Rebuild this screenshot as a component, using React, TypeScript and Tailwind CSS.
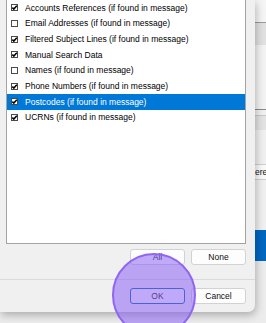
import React from "react";

const ITEMS = [
  { label: "Accounts References (if found in message)", checked: true },
  { label: "Email Addresses (if found in message)", checked: false },
  { label: "Filtered Subject Lines (if found in message)", checked: true },
  { label: "Manual Search Data", checked: true },
  { label: "Names (if found in message)", checked: false },
  { label: "Phone Numbers (if found in message)", checked: true },
  { label: "Postcodes (if found in message)", checked: true, selected: true },
  { label: "UCRNs (if found in message)", checked: true },
];

function Check({ checked }: { checked: boolean }) {
  return (
    <span className="w-[7px] h-[7px] shrink-0 bg-white border border-[#4a4a4a] flex items-center justify-center">
      {checked && (
        <svg width="7" height="7" viewBox="0 0 7 7" className="-m-px">
          <polyline points="1.3,3.6 2.8,5.1 5.8,1.7" fill="none" stroke="#000" strokeWidth="1.5" />
        </svg>
      )}
    </span>
  );
}

function Btn({ children, primary }: { children: React.ReactNode; primary?: boolean }) {
  return (
    <button
      className={`w-[55px] h-[16px] rounded-[3px] bg-[#fdfdfd] text-[8.5px] text-[#111] leading-none flex items-center justify-center ${
        primary ? "border border-[#0067c0] shadow-[inset_0_0_0_1px_#ffffff]" : "border border-[#d2d2d2]"
      }`}
    >
      {children}
    </button>
  );
}

export default function App() {
  return (
    <div className="relative w-[266px] h-[323px] overflow-hidden bg-[#ececec] font-['Liberation_Sans',Arial,sans-serif]">
      <div className="flex h-full">
        {/* dialog */}
        <div className="relative z-10 w-[255px] h-[312px] shrink-0 bg-[#f0f0f0] rounded-br-[7px] shadow-[1px_3px_9px_rgba(0,0,0,0.28)] flex flex-col">
          <div className="ml-[6px] w-[240px] h-[244px] bg-white border border-t-0 border-[#a3a3a3]">
            {ITEMS.map((it) => (
              <div
                key={it.label}
                className={`h-[15.7px] flex items-center gap-[7px] pl-[4px] text-[8.5px] whitespace-nowrap ${
                  it.selected ? "bg-[#0078d7] text-white" : "text-black"
                }`}
              >
                <Check checked={it.checked} />
                <span className="leading-none">{it.label}</span>
              </div>
            ))}
          </div>
          <div className="mt-[5px] flex justify-end gap-[6px] pr-[9px]">
            <Btn>All</Btn>
            <Btn>None</Btn>
          </div>
          <div className="mt-[14px] h-px bg-[#dadada]" />
          <div className="mt-[8px] flex justify-end gap-[6px] pr-[9px]">
            <Btn primary>OK</Btn>
            <Btn>Cancel</Btn>
          </div>
        </div>

        {/* application behind the dialog */}
        <div className="flex-1 flex flex-col">
          <div className="h-[22px] bg-[#f5f5f5]" />
          <div className="h-px bg-[#9a9a9a]" />
          <div className="h-[22px] bg-[#e1e1e1]" />
          <div className="h-[64px] bg-[#f3f3f3]" />
          <div className="h-px bg-[#8a8a8a]" />
          <div className="h-[5px] bg-[#f0f0f0]" />
          <div className="h-px bg-[#c8c8c8]" />
          <div className="h-[14px] bg-[#e3e3e3]" />
          <div className="h-[34px] bg-[#f0f0f0]" />
          <div className="h-[16px] bg-[#fafafa] border-y border-[#cfcfcf] flex items-center text-[8.5px] text-[#111] leading-none overflow-hidden whitespace-nowrap">
            ere
          </div>
          <div className="h-[50px] bg-[#f0f0f0]" />
          <div className="h-[31px] bg-[#0067c0]" />
          <div className="flex-1 bg-[#ececec]" />
        </div>
      </div>

      {/* click highlight */}
      <div className="absolute z-20 left-[112px] top-[253px] w-[84px] h-[84px] rounded-full bg-[rgba(139,92,246,0.52)] border-2 border-[#9065f2]" />
    </div>
  );
}
